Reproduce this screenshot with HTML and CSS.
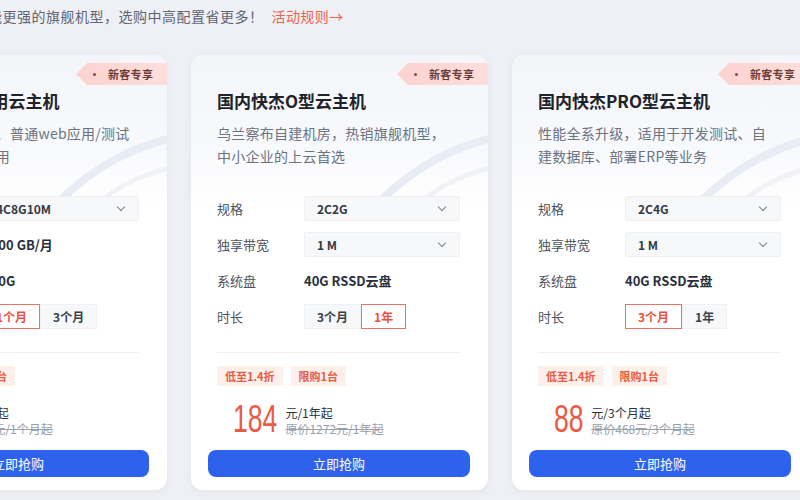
FILE: index.html
```html
<!DOCTYPE html>
<html lang="zh-CN">
<head>
<meta charset="utf-8">
<title>快杰云主机</title>
<link rel="stylesheet" href="styles.css">
</head>
<body>
<div class="page">
  <p class="intro">首购用户可体验性能更强的旗舰机型，选购中高配置省更多！<a class="rule" href="#">活动规则→</a></p>
  <div class="cards">

    <div class="card">
      <svg class="swoosh" viewBox="0 0 120 120" width="120" height="120"><path d="M0 110 C40 70 80 50 130 40" fill="none" stroke="#e8ecf4" stroke-width="8"/><path d="M30 120 C60 90 95 75 130 70" fill="none" stroke="#f0f2f7" stroke-width="5"/></svg>
      <div class="badge"><span class="dot"></span>新客专享</div>
      <div class="body">
        <h2 class="title">国内快杰S通用云主机</h2>
        <p class="desc">适用于个人站点、普通web应用/测试环境等轻量化使用</p>
        <div class="rows">
          <div class="row"><span class="label">规格</span><div class="select">4C8G10M<span class="chev"></span></div></div>
          <div class="row"><span class="label">流量</span><span class="value">1000 GB/月</span></div>
          <div class="row"><span class="label">系统盘</span><span class="value">100G</span></div>
          <div class="row"><span class="label">时长</span><div class="tabs"><span class="tab on">1个月</span><span class="tab">3个月</span></div></div>
        </div>
        <div class="divider"></div>
        <div class="tags"><span class="tag">低至1折</span><span class="tag">限购1台</span></div>
        <div class="price"><span class="num n2">18</span><div class="unit"><span>元/1个月起</span><s>原价128元/1个月起</s></div></div>
      </div>
      <button class="buy">立即抢购</button>
    </div>

    <div class="card">
      <svg class="swoosh" viewBox="0 0 120 120" width="120" height="120"><path d="M0 110 C40 70 80 50 130 40" fill="none" stroke="#e8ecf4" stroke-width="8"/><path d="M30 120 C60 90 95 75 130 70" fill="none" stroke="#f0f2f7" stroke-width="5"/></svg>
      <div class="badge"><span class="dot"></span>新客专享</div>
      <div class="body">
        <h2 class="title">国内快杰O型云主机</h2>
        <p class="desc">乌兰察布自建机房，热销旗舰机型，中小企业的上云首选</p>
        <div class="rows">
          <div class="row"><span class="label">规格</span><div class="select">2C2G<span class="chev"></span></div></div>
          <div class="row"><span class="label">独享带宽</span><div class="select">1 M<span class="chev"></span></div></div>
          <div class="row"><span class="label">系统盘</span><span class="value">40G RSSD云盘</span></div>
          <div class="row"><span class="label">时长</span><div class="tabs"><span class="tab">3个月</span><span class="tab on">1年</span></div></div>
        </div>
        <div class="divider"></div>
        <div class="tags"><span class="tag">低至1.4折</span><span class="tag">限购1台</span></div>
        <div class="price"><span class="num n3">184</span><div class="unit"><span>元/1年起</span><s>原价1272元/1年起</s></div></div>
      </div>
      <button class="buy">立即抢购</button>
    </div>

    <div class="card">
      <svg class="swoosh" viewBox="0 0 120 120" width="120" height="120"><path d="M0 110 C40 70 80 50 130 40" fill="none" stroke="#e8ecf4" stroke-width="8"/><path d="M30 120 C60 90 95 75 130 70" fill="none" stroke="#f0f2f7" stroke-width="5"/></svg>
      <div class="badge"><span class="dot"></span>新客专享</div>
      <div class="body">
        <h2 class="title">国内快杰PRO型云主机</h2>
        <p class="desc">性能全系升级，适用于开发测试、自建数据库、部署ERP等业务</p>
        <div class="rows">
          <div class="row"><span class="label">规格</span><div class="select">2C4G<span class="chev"></span></div></div>
          <div class="row"><span class="label">独享带宽</span><div class="select">1 M<span class="chev"></span></div></div>
          <div class="row"><span class="label">系统盘</span><span class="value">40G RSSD云盘</span></div>
          <div class="row"><span class="label">时长</span><div class="tabs"><span class="tab on">3个月</span><span class="tab">1年</span></div></div>
        </div>
        <div class="divider"></div>
        <div class="tags"><span class="tag">低至1.4折</span><span class="tag">限购1台</span></div>
        <div class="price"><span class="num n2">88</span><div class="unit"><span>元/3个月起</span><s>原价468元/3个月起</s></div></div>
      </div>
      <button class="buy">立即抢购</button>
    </div>

  </div>
</div>
</body>
</html>
```

FILE: styles.css
```css
* { box-sizing: border-box; }
html, body { margin: 0; padding: 0; }
body {
  background: #eef0f5;
  font-family: "Noto Sans CJK SC", "Noto Sans", sans-serif;
  color: #1f2329;
  overflow: hidden;
  width: 800px;
  height: 500px;
}
.page {
  margin-left: -130px;
  width: 1100px;
}
.intro {
  margin: 0;
  padding: 6px 0 0 2px;
  height: 26px;
  line-height: 20px;
  font-size: 14px;
  letter-spacing: 0.5px;
  color: #5f6672;
  white-space: nowrap;
}
.rule {
  color: #f0624d;
  text-decoration: none;
  margin-left: 8px;
  letter-spacing: 0.4px;
}
.cards {
  display: flex;
  gap: 24px;
  margin-top: 29px;
}
.card {
  position: relative;
  width: 297px;
  height: 435px;
  flex: none;
  border-radius: 12px;
  background: linear-gradient(180deg, #f3f5f9 0, #f8f9fc 90px, #ffffff 150px);
  box-shadow: 0 2px 8px rgba(30, 40, 70, 0.05);
  padding: 0 18px 13px 17px;
  overflow: hidden;
}
.swoosh {
  position: absolute;
  right: -8px;
  top: 40px;
}
.badge {
  position: absolute;
  right: 0;
  top: 8px;
  height: 22px;
  width: 91px;
  background: linear-gradient(90deg, #fbd3cf, #fddedb);
  clip-path: polygon(11px 0, 100% 0, 100% 100%, 11px 100%, 0 50%);
  display: flex;
  align-items: center;
  padding-left: 17px;
  font-size: 11px;
  font-weight: 700;
  color: #6a3c38;
  letter-spacing: 0.3px;
}
.dot {
  width: 3px;
  height: 3px;
  border-radius: 50%;
  background: #8b4a43;
  margin-right: 12px;
}
.body {
  position: relative;
  padding: 34px 10px 0 9px;
}
.title {
  margin: 0;
  font-size: 17px;
  line-height: 24px;
  font-weight: 700;
  color: #1f2329;
}
.desc {
  margin: 9px 0 0;
  width: 240px;
  font-size: 14px;
  line-height: 23px;
  letter-spacing: 0.25px;
  color: #6b7280;
  height: 46px;
}
.rows {
  margin-top: 28px;
  display: flex;
  flex-direction: column;
  gap: 11px;
}
.row {
  display: flex;
  align-items: center;
  height: 25px;
}
.label {
  width: 87px;
  flex: none;
  font-size: 13px;
  color: #4b5260;
}
.select {
  flex: 1;
  height: 25px;
  display: flex;
  align-items: center;
  justify-content: space-between;
  padding: 0 12px;
  background: #f7f8fa;
  border: 1px solid #eef0f3;
  border-radius: 2px;
  font-size: 12px;
  font-weight: 700;
  color: #333a45;
}
.chev {
  width: 6px;
  height: 6px;
  border-right: 1.3px solid #7a808a;
  border-bottom: 1.3px solid #7a808a;
  transform: translateY(-2px) rotate(45deg);
  margin-right: 2px;
}
.value {
  font-size: 13px;
  font-weight: 700;
  color: #2a303b;
}
.tabs {
  display: flex;
  height: 25px;
}
.tab {
  height: 25px;
  display: flex;
  align-items: center;
  padding: 0 12px;
  font-size: 12px;
  font-weight: 700;
  color: #3a404b;
  background: #f7f8fa;
  border: 1px solid #f0f1f4;
}
.tab.on {
  background: #fff;
  border-color: #e47468;
  color: #e8503c;
}
.divider {
  margin-top: 23px;
  height: 1px;
  background: #eef0f4;
}
.tags {
  margin-top: 13px;
  display: flex;
  gap: 8px;
}
.tag {
  height: 20px;
  line-height: 20px;
  padding: 0 8px;
  font-size: 11px;
  font-weight: 700;
  color: #ea5a44;
  background: #fdf0ea;
}
.price {
  margin-top: 13px;
  height: 40px;
  display: flex;
  align-items: center;
  padding-left: 16px;
}
.num {
  display: inline-block;
  font-family: "Liberation Sans", Arial, sans-serif;
  font-size: 38px;
  line-height: 40px;
  color: #ea5a44;
  transform: scaleX(0.7);
  transform-origin: left center;
}
.num.n3 { margin-right: -11px; }
.num.n2 { margin-right: -5px; }
.unit {
  display: flex;
  flex-direction: column;
  gap: 1px;
  font-size: 12px;
  line-height: 15px;
  color: #2a303b;
  padding-top: 2px;
}
.unit s {
  color: #9aa0aa;
}
.buy {
  display: block;
  width: 100%;
  margin-top: 11px;
  height: 27px;
  border: 0;
  border-radius: 8px;
  background: #2f62ec;
  color: #fff;
  font-family: "Noto Sans CJK SC", sans-serif;
  font-size: 13px;
  cursor: pointer;
}
```
